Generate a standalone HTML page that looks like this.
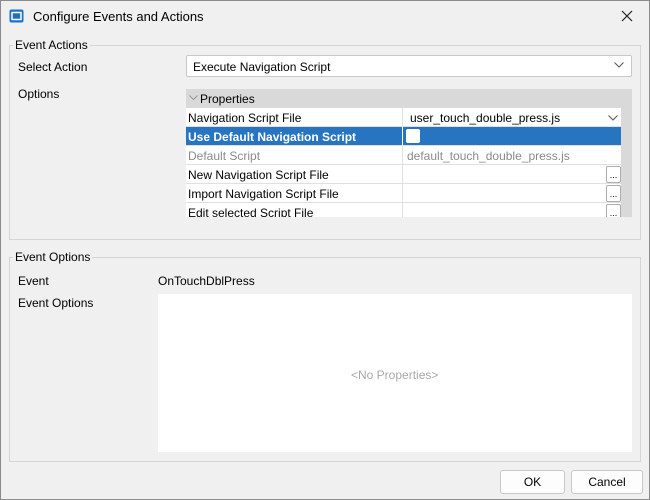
<!DOCTYPE html>
<html><head><style>
*{box-sizing:border-box;margin:0;padding:0}
body{width:650px;height:500px;background:#f0f0f0;font-family:"Liberation Sans",sans-serif;font-size:12px;color:#000;position:relative;overflow:hidden}
.a{position:absolute;white-space:nowrap}
.win{position:absolute;left:0;top:0;width:650px;height:500px;border:1px solid #8a8a8a}
.grp{position:absolute;border:1px solid #d5d5d5}
.lg{position:absolute;background:#f0f0f0;padding:0 2px}
.row{position:absolute;left:186px;width:435px;height:19px;background:#fff;border-bottom:1px solid #e0e0e0}
.row .k{position:absolute;left:2px;top:3px}
.row .v{position:absolute;left:221px;top:3px}
.row .d{position:absolute;left:216px;top:0;width:1px;height:19px;background:#e0e0e0}
.btn3{position:absolute;left:420px;top:1px;width:15px;height:17px;border:1px solid #adadad;border-radius:2px;background:#fff;font-size:9px;text-align:center;line-height:17px}
.b{position:absolute;height:24px;border:1px solid #c8c8c8;border-radius:3px;background:#fdfdfd;text-align:center;line-height:22px}
</style></head><body>
<div class="win"></div>
<svg class="a" style="left:9px;top:9px" width="15" height="14" viewBox="0 0 15 14"><rect x="0.5" y="0.5" width="14" height="13" rx="2" fill="#1e6fc4"/><rect x="3" y="3.5" width="9" height="7" fill="none" stroke="#fff" stroke-width="1.5"/></svg>
<div class="a" style="left:33px;top:9px;font-size:13px">Configure Events and Actions</div>
<svg class="a" style="left:621px;top:10px" width="12" height="12"><path d="M1 1L11 11M11 1L1 11" stroke="#222" stroke-width="1.2"/></svg>

<div class="grp" style="left:9px;top:45px;width:632px;height:195px"></div>
<div class="lg" style="left:13px;top:38px">Event Actions</div>
<div class="a" style="left:18px;top:60px">Select Action</div>
<div class="a" style="left:186px;top:55px;width:446px;height:22px;background:#fff;border:1px solid #c8c8c8;border-radius:2px"></div>
<div class="a" style="left:193px;top:60px">Execute Navigation Script</div>
<svg class="a" style="left:614px;top:62px" width="10" height="6"><path d="M0.5 0.5L5 5L9.5 0.5" fill="none" stroke="#555"/></svg>
<div class="a" style="left:18px;top:87px">Options</div>

<div class="a" style="left:186px;top:89px;width:446px;height:128px;background:#d9d9d9"></div>
<svg class="a" style="left:189px;top:95px" width="9" height="6"><path d="M0.5 0.5L4.5 4.5L8.5 0.5" fill="none" stroke="#999"/></svg>
<div class="a" style="left:200px;top:92px">Properties</div>

<div class="row" style="top:108px"><div class="k">Navigation Script File</div><div class="d"></div><div class="v" style="left:224px">user_touch_double_press.js</div><svg class="a" style="left:422px;top:7px" width="10" height="6"><path d="M0.5 0.5L5 5L9.5 0.5" fill="none" stroke="#555"/></svg></div>
<div class="row" style="top:127px;background:#2775c0;color:#fff;font-weight:bold"><div class="k">Use Default Navigation Script</div><div class="d" style="background:#fff"></div><div class="a" style="left:220px;top:2px;width:14px;height:14px;background:#fff;border-radius:2px"></div></div>
<div class="row" style="top:146px;color:#8a8a8a"><div class="k">Default Script</div><div class="d"></div><div class="v">default_touch_double_press.js</div></div>
<div class="row" style="top:165px"><div class="k">New Navigation Script File</div><div class="d"></div><div class="btn3">...</div></div>
<div class="row" style="top:184px"><div class="k">Import Navigation Script File</div><div class="d"></div><div class="btn3">...</div></div>
<div class="row" style="top:203px;height:14px;overflow:hidden;border:none"><div class="k">Edit selected Script File</div><div class="d"></div><div class="btn3">...</div></div>

<div class="grp" style="left:9px;top:257px;width:632px;height:205px"></div>
<div class="lg" style="left:13px;top:250px">Event Options</div>
<div class="a" style="left:18px;top:274px">Event</div>
<div class="a" style="left:158px;top:274px">OnTouchDblPress</div>
<div class="a" style="left:18px;top:296px">Event Options</div>
<div class="a" style="left:158px;top:294px;width:474px;height:158px;background:#fff"></div>
<div class="a" style="left:351px;top:368px;color:#a8a8a8">&lt;No Properties&gt;</div>

<div class="b" style="left:500px;top:470px;width:65px">OK</div>
<div class="b" style="left:571px;top:470px;width:72px">Cancel</div>
</body></html>
